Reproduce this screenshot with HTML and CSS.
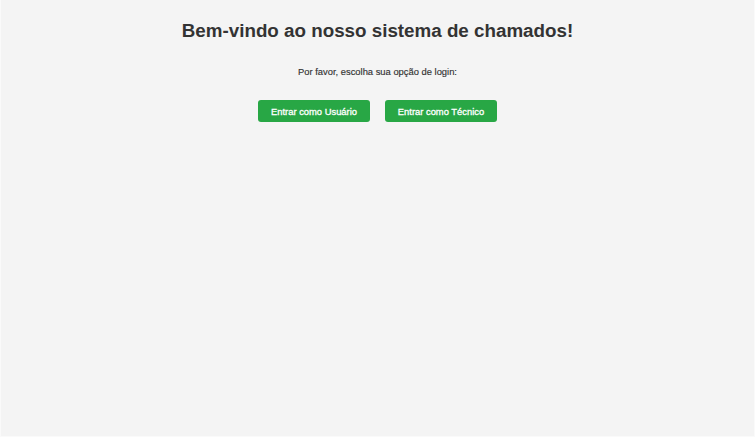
FILE: index.html
```html
<!DOCTYPE html>
<html lang="pt-BR">
<head>
<meta charset="utf-8">
<title>Sistema de Chamados</title>
<link rel="stylesheet" href="styles.css">
</head>
<body>
<div class="page">
  <h1 class="title">Bem-vindo ao nosso sistema de chamados!</h1>
  <p class="subtitle">Por favor, escolha sua opção de login:</p>
  <div class="actions">
    <button class="btn">Entrar como Usuário</button>
    <button class="btn">Entrar como Técnico</button>
  </div>
</div>
</body>
</html>
```

FILE: styles.css
```css
html, body {
  margin: 0;
  padding: 0;
  height: 100%;
}
body {
  background: #f4f4f4;
  font-family: "Liberation Sans", Arial, sans-serif;
  color: #333;
}
.page {
  box-sizing: border-box;
  min-height: 100%;
  border: 1px solid #fafafa;
  border-top: none;
  text-align: center;
  padding-top: 19px;
}
.title {
  margin: 0;
  font-size: 18.8px;
  font-weight: bold;
  line-height: 24px;
  color: #333;
}
.subtitle {
  margin: 23px 0 0;
  font-size: 9.4px;
  line-height: 12px;
  color: #333;
  -webkit-text-stroke: 0.15px #333;
}
.actions {
  display: flex;
  justify-content: center;
  gap: 15px;
  margin-top: 22px;
}
.btn {
  font-family: "Liberation Sans", Arial, sans-serif;
  font-size: 9.4px;
  font-weight: normal;
  color: #fff;
  -webkit-text-stroke: 0.3px #fff;
  background: #28a745;
  border: none;
  border-radius: 3px;
  height: 22px;
  width: 112px;
  padding: 0;
}
```
